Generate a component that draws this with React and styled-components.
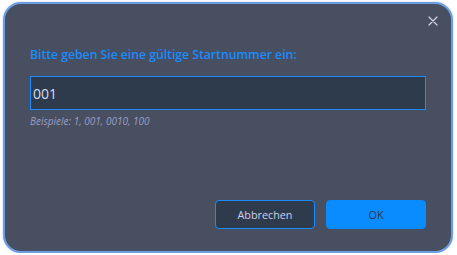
import React, { useState } from "react";
import styled, { createGlobalStyle } from "styled-components";

const GlobalStyle = createGlobalStyle`
  html, body {
    margin: 0;
    padding: 0;
    background: #ffffff;
  }
  body {
    font-family: "Open Sans", "Noto Sans", "Liberation Sans", sans-serif;
  }
`;

const Page = styled.div`
  padding: 2px 0 0 3px;
`;

const Dialog = styled.div`
  box-sizing: border-box;
  width: 450px;
  height: 251px;
  background: #474f61;
  border: 2px solid #6c9de0;
  border-radius: 18px;
  box-shadow: 0 0 2px rgba(108, 157, 224, 0.6);
  display: flex;
  flex-direction: column;
  padding: 0 25px 22px 25px;
`;

const Header = styled.div`
  height: 30px;
  display: flex;
  justify-content: flex-end;
  align-items: center;
  margin-top: 2px;
  margin-right: -14px;
`;

const CloseButton = styled.button`
  border: none;
  background: transparent;
  padding: 0;
  width: 14px;
  height: 14px;
  display: flex;
  align-items: center;
  justify-content: center;
  cursor: pointer;
`;

const Title = styled.div`
  margin-top: 10px;
  font-size: 12.2px;
  line-height: 17px;
  font-weight: 600;
  color: #1a8cff;
`;

const Input = styled.input`
  box-sizing: border-box;
  margin-top: 13px;
  width: 100%;
  height: 34px;
  background: #2d3b4c;
  border: 1px solid #1a8cff;
  color: #dcdcf0;
  font-family: inherit;
  font-size: 14px;
  padding: 0 2px;
  outline: none;
`;

const Hint = styled.div`
  margin-top: 4px;
  font-size: 10px;
  line-height: 14px;
  font-style: italic;
  color: #9d9dc4;
`;

const Spacer = styled.div`
  flex: 1;
`;

const Actions = styled.div`
  display: flex;
  justify-content: flex-end;
  gap: 11px;
`;

const Button = styled.button`
  box-sizing: border-box;
  width: 100px;
  height: 29px;
  border-radius: 4px;
  font-family: inherit;
  font-size: 10.8px;
  cursor: pointer;
  border: 1px solid ${(p) => (p.primary ? "#0a8cff" : "#1a8cff")};
  background: ${(p) => (p.primary ? "#0a8cff" : "#2d3b4c")};
  color: ${(p) => (p.primary ? "#2b3a4c" : "#cfcfee")};
`;

const App = () => {
  const [value, setValue] = useState("001");

  return (
    <Page>
      <GlobalStyle />
      <Dialog>
        <Header>
          <CloseButton aria-label="Schließen">
            <svg width="10" height="10" viewBox="0 0 10 10">
              <path
                d="M1 1 L9 9 M9 1 L1 9"
                stroke="#d4d4e6"
                strokeWidth="1.2"
                strokeLinecap="round"
              />
            </svg>
          </CloseButton>
        </Header>
        <Title>Bitte geben Sie eine gültige Startnummer ein:</Title>
        <Input value={value} onChange={(e) => setValue(e.target.value)} />
        <Hint>Beispiele: 1, 001, 0010, 100</Hint>
        <Spacer />
        <Actions>
          <Button>Abbrechen</Button>
          <Button primary>OK</Button>
        </Actions>
      </Dialog>
    </Page>
  );
};

export default App;
